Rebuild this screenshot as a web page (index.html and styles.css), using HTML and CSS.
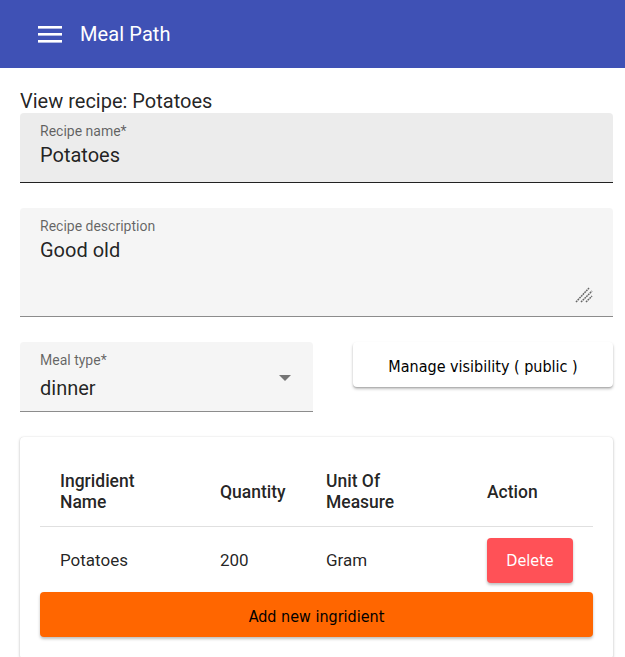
FILE: index.html
```html
<!DOCTYPE html>
<html>
<head>
<meta charset="utf-8">
<link rel="stylesheet" href="styles.css">
</head>
<body>
<header class="toolbar">
  <svg class="menu-icon" width="24" height="18" viewBox="0 0 24 18"><rect x="0" y="0" width="24" height="2.6" fill="#fff"/><rect x="0" y="7" width="24" height="2.6" fill="#fff"/><rect x="0" y="14" width="24" height="2.6" fill="#fff"/></svg>
  <span class="title">Meal Path</span>
</header>
<main class="content">
  <div class="page-title">View recipe: Potatoes</div>
  <div class="field field-name">
    <div class="label">Recipe name*</div>
    <div class="value">Potatoes</div>
  </div>
  <div class="field field-desc">
    <div class="label">Recipe description</div>
    <div class="value">Good old</div>
    <svg class="resize" width="18" height="16" viewBox="0 0 18 16"><g stroke="#666" stroke-width="1.5" stroke-dasharray="1.8 0.7"><line x1="1" y1="15" x2="14" y2="1"/><line x1="6" y1="15" x2="17" y2="4"/><line x1="11" y1="15" x2="17" y2="9"/></g></svg>
  </div>
  <div class="row">
    <div class="field field-select">
      <div class="select-inner">
        <div class="label">Meal type*</div>
        <div class="value value-select">dinner</div>
      </div>
      <span class="arrow"></span>
    </div>
    <button class="btn-visibility">Manage visibility ( public )</button>
  </div>
  <section class="card">
    <table class="table">
      <thead>
        <tr>
          <th class="c1">Ingridient<br>Name</th>
          <th class="c2">Quantity</th>
          <th class="c3">Unit Of<br>Measure</th>
          <th class="c4">Action</th>
        </tr>
      </thead>
      <tbody>
        <tr>
          <td>Potatoes</td>
          <td>200</td>
          <td>Gram</td>
          <td><button class="btn-delete">Delete</button></td>
        </tr>
      </tbody>
    </table>
    <button class="btn-add">Add new ingridient</button>
  </section>
</main>
</body>
</html>
```
FILE: styles.css
```css
* { box-sizing: border-box; }
html, body { margin: 0; padding: 0; background: #fff; }
body { font-family: Roboto, "Liberation Sans", sans-serif; color: rgba(0,0,0,0.87); width: 625px; height: 657px; overflow: hidden; }

.toolbar {
  height: 68px;
  background: #3f51b5;
  display: flex;
  align-items: center;
  padding-left: 38px;
  color: #fff;
}
.menu-icon { display: block; margin-right: 18px; margin-top: 1px; }
.title { font-size: 20px; font-weight: 400; letter-spacing: 0.1px; }

.content { padding: 0 12px 0 20px; }
.page-title { font-size: 20px; margin-top: 22px; line-height: 22px; height: 23px; }

.field {
  background: #f5f5f5;
  border-radius: 4px 4px 0 0;
  border-bottom: 1px solid #8c8c8c;
  padding: 9px 20px 0 20px;
  position: relative;
}
.label { font-size: 14px; color: rgba(0,0,0,0.6); line-height: 18px; }
.value { font-size: 20px; line-height: 26px; margin-top: 2px; color: rgba(0,0,0,0.87); }
.value-select { margin-top: 6px; }

.field-name { height: 70px; background: #ececec; border-bottom: 1px solid #222; }
.field-desc { height: 109px; margin-top: 25px; }
.resize { position: absolute; right: 20px; bottom: 13px; }

.row { display: flex; align-items: flex-start; gap: 40px; margin-top: 25px; }
.field-select { width: 293px; height: 70px; display: flex; align-items: flex-start; justify-content: space-between; }
.arrow {
  width: 0; height: 0;
  border-left: 6px solid transparent;
  border-right: 6px solid transparent;
  border-top: 6px solid #757575;
  margin-top: 24px;
  margin-right: 2px;
}
.btn-visibility {
  flex: 1;
  height: 45px;
  background: #fff;
  border: none;
  border-radius: 4px;
  box-shadow: 0 2px 3px rgba(0,0,0,0.25), 0 1px 1px rgba(0,0,0,0.12);
  font-family: Tahoma, "DejaVu Sans Condensed", "Liberation Sans", sans-serif;
  font-size: 16px;
  color: #000;
  padding: 0;
  padding-top: 4px;
}

.card {
  margin-top: 25px;
  background: #fff;
  border-radius: 4px;
  box-shadow: 0 1px 3px rgba(0,0,0,0.25), 0 0 1px rgba(0,0,0,0.12);
  padding: 0 20px 20px 20px;
  height: 222px;
}
.table { width: 100%; border-collapse: collapse; }
.table th {
  text-align: left;
  font-weight: 500;
  font-size: 17.5px;
  line-height: 21px;
  height: 89px;
  padding: 22px 0 0 20px;
  vertical-align: middle;
  border-bottom: 1px solid #e0e0e0;
  color: rgba(0,0,0,0.87);
}
.table td {
  font-size: 17px;
  height: 66px;
  padding: 2px 0 0 20px;
  vertical-align: middle;
  color: rgba(0,0,0,0.87);
}
.c1 { width: 160px; }
.c2 { width: 106px; }
.c3 { width: 161px; }
.btn-delete {
  width: 86px; height: 45px;
  background: #ff5157;
  color: #fff;
  border: none;
  border-radius: 4px;
  box-shadow: 0 2px 3px rgba(0,0,0,0.25);
  font-family: Tahoma, "DejaVu Sans Condensed", "Liberation Sans", sans-serif;
  font-size: 16px;
  margin-left: 0;
  margin-top: 1px;
}
.btn-add {
  display: block;
  width: 100%;
  height: 45px;
  background: #ff6600;
  border: none;
  border-radius: 4px;
  box-shadow: 0 2px 3px rgba(0,0,0,0.25);
  font-family: Tahoma, "DejaVu Sans Condensed", "Liberation Sans", sans-serif;
  font-size: 16px;
  color: #000;
  padding-top: 4px;
}
```
